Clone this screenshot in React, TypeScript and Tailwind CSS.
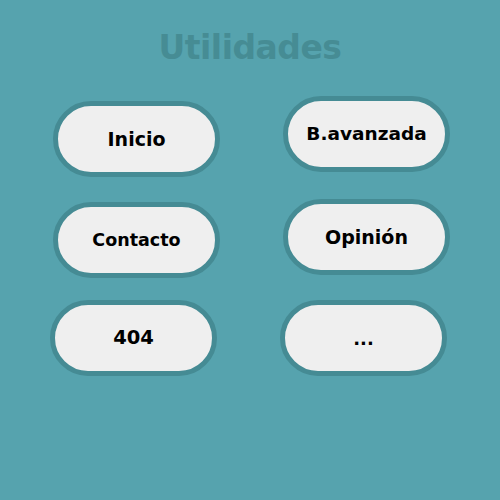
const font = { fontFamily: '"DejaVu Sans", "Noto Sans", sans-serif' };

type Item = { label: string; cls: string; text: string };

const rows: Item[][] = [
  [
    { label: "Inicio", cls: "mt-[5px]", text: "text-[19px]" },
    { label: "B.avanzada", cls: "", text: "text-[18.5px]" },
  ],
  [
    { label: "Contacto", cls: "mt-[3px]", text: "text-[17.5px]" },
    { label: "Opinión", cls: "", text: "text-[19px]" },
  ],
  [
    { label: "404", cls: "-ml-[3px]", text: "text-[19.5px]" },
    { label: "...", cls: "", text: "text-[18px]" },
  ],
];

function Pill({ item }: { item: Item }) {
  return (
    <button
      className={`${item.cls} w-[167px] h-[76px] rounded-full border-[5px] border-[#458b94] bg-[#efefef] flex items-center justify-center font-bold text-black ${item.text}`}
      style={font}
    >
      {item.label}
    </button>
  );
}

export default function App() {
  return (
    <div className="w-[500px] h-[500px] bg-[#56a3ae] flex flex-col items-center" style={font}>
      <h1 className="mt-[31px] text-[33px] leading-none font-bold text-[#468c94] tracking-[-0.5px]">Utilidades</h1>
      <div className="mt-[32px] w-full flex flex-col gap-[22px] pl-[53px]">
        {rows.map((row, i) => (
          <div key={i} className="flex items-start gap-[63px]">
            {row.map((item) => (
              <Pill key={item.label} item={item} />
            ))}
          </div>
        ))}
      </div>
    </div>
  );
}
